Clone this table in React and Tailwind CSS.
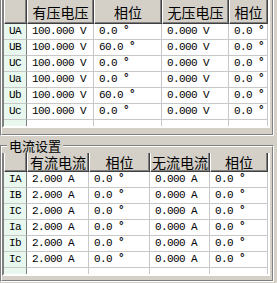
const topRows = [
  ["UA", "100.000 V", "0.0 ", "0.000 V", "0.0 "],
  ["UB", "100.000 V", "60.0 ", "0.000 V", "0.0 "],
  ["UC", "100.000 V", "0.0 ", "0.000 V", "0.0 "],
  ["Ua", "100.000 V", "0.0 ", "0.000 V", "0.0 "],
  ["Ub", "100.000 V", "60.0 ", "0.000 V", "0.0 "],
  ["Uc", "100.000 V", "0.0 ", "0.000 V", "0.0 "],
];
const botRows = [
  ["IA", "2.000 A", "0.0 ", "0.000 A", "0.0 "],
  ["IB", "2.000 A", "0.0 ", "0.000 A", "0.0 "],
  ["IC", "2.000 A", "0.0 ", "0.000 A", "0.0 "],
  ["Ia", "2.000 A", "0.0 ", "0.000 A", "0.0 "],
  ["Ib", "2.000 A", "0.0 ", "0.000 A", "0.0 "],
  ["Ic", "2.000 A", "0.0 ", "0.000 A", "0.0 "],
];

function HeaderCell({ children, h }) {
  return (
    <div
      className={`${h} flex items-center justify-center bg-[#d4d0c8] border-l border-l-white border-r border-r-[#404040] border-b border-b-[#404040] shadow-[inset_-1px_-1px_0_#808080] text-[14px] leading-none tracking-normal text-black font-['Noto_Sans_CJK_SC',sans-serif]`}
    >
      {children}
    </div>
  );
}

function Grid({ cols, headers, rows, headerH }) {
  return (
    <div className="w-[268px] border-l-2 border-l-[#808080] border-r-2 border-r-white border-b-2 border-b-white bg-white">
      <div className={`grid ${cols}`}>
        <HeaderCell h={headerH}>{""}</HeaderCell>
        {headers.map((t, i) => (
          <HeaderCell key={i} h={headerH}>
            {t}
          </HeaderCell>
        ))}
        {rows.map((r, ri) =>
          r.map((c, ci) =>
            ci === 0 ? (
              <div
                key={`${ri}-${ci}`}
                className="h-[16px] flex items-center pl-[5px] bg-[#e8f8ee] border-r border-r-[#808080] border-b border-b-[#c8c8c8]"
              >
                {c}
              </div>
            ) : (
              <div
                key={`${ri}-${ci}`}
                className="h-[16px] flex items-center pl-[5px] bg-white border-r border-b border-[#c8c8c8] whitespace-pre"
              >
                {c}
                {ci % 2 === 0 ? (
                  <span className="font-bold relative -top-[1px]">°</span>
                ) : null}
              </div>
            )
          )
        )}
        {[0, 1, 2, 3, 4].map((i) =>
          i === 0 ? (
            <div key={i} className="h-[6px] bg-[#e8f8ee] border-r border-r-[#808080]" />
          ) : (
            <div key={i} className="h-[6px] bg-white border-r border-[#c8c8c8]" />
          )
        )}
      </div>
    </div>
  );
}

export default function App() {
  return (
    <div className="w-[277px] h-[283px] overflow-hidden bg-[#d4d0c8] font-['Liberation_Mono',monospace] text-[11px] tracking-[-0.6px] text-black">
      {/* top group box (title clipped) */}
      <div className="w-[274px] h-[136px] border-r border-r-white border-b border-b-white border-l border-l-[#808080]">
        <div className="h-full border-l border-l-white border-r border-r-[#808080] border-b border-b-[#808080]">
          <Grid
            cols="grid-cols-[23px_67px_68px_67px_39px]"
            headers={["有压电压", "相位", "无压电压", "相位"]}
            rows={topRows}
            headerH="h-[24px]"
          />
        </div>
      </div>
      {/* bottom group box */}
      <div className="relative mt-[9px] w-[274px] h-[137px] border border-[#808080] border-r-white border-b-white">
        <div className="h-full border border-white border-r-[#808080] border-b-[#808080] pt-[6px]">
          <Grid
            cols="grid-cols-[23px_62px_61px_60px_58px]"
            headers={["有流电流", "相位", "无流电流", "相位"]}
            rows={botRows}
            headerH="h-[19px]"
          />
        </div>
        <div className="absolute left-[6px] -top-[8px] px-[2px] bg-[#d4d0c8] text-[13px] leading-[15px] tracking-normal font-['Noto_Sans_CJK_SC',sans-serif]">
          电流设置
        </div>
      </div>
    </div>
  );
}
